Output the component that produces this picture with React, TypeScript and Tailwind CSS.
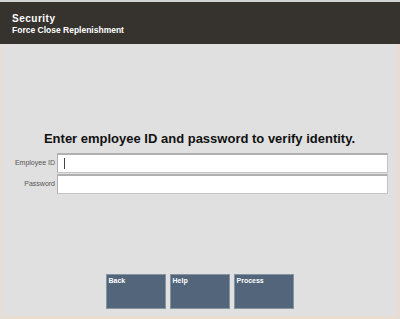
import React from 'react';

const Field: React.FC<{ label: string; cursor?: boolean }> = ({ label, cursor }) => (
  <div className="flex items-center">
    <label className="w-[55px] pr-[2px] text-right text-[7px] text-[#555555]">{label}</label>
    <div className="w-[331px] h-[20px] bg-white border border-[#c4c4c4] border-t-2 border-t-[#b0b0b0] border-l-[#b0b0b0] flex items-center pl-[6px]">
      {cursor && <span className="w-px h-[11px] bg-[#444444]" />}
    </div>
  </div>
);

const KeyButton: React.FC<{ label: string }> = ({ label }) => (
  <button className="w-[60px] h-[35px] bg-[#52657a] border border-[#8593a0] text-white text-[7px] font-bold text-left flex items-start px-[2px] pt-[1px]">
    {label}
  </button>
);

export default function App() {
  return (
    <div className="w-[400px] h-[319px] bg-[#e0e0e0] border-t-2 border-[#d4d4d4] flex flex-col font-['Liberation_Sans',Arial,sans-serif]">
      <header className="h-[42px] bg-[#36332f] text-white font-bold px-[12px] pt-[11px]">
        <div className="text-[10px] leading-[12px] tracking-[0.5px]">Security</div>
        <div className="text-[8.5px] leading-[11px]">Force Close Replenishment</div>
      </header>
      <main className="flex-1 flex flex-col border-l-2 border-r-[3px] border-b-[3px] border-[#e8ddd3]">
        <h1 className="mt-[87px] text-center text-[13px] leading-[16px] font-bold text-[#111111]">
          Enter employee ID and password to verify identity.
        </h1>
        <div className="mt-[6px] flex flex-col gap-px">
          <Field label="Employee ID" cursor />
          <Field label="Password" />
        </div>
        <div className="mt-[80px] flex justify-center gap-1">
          <KeyButton label="Back" />
          <KeyButton label="Help" />
          <KeyButton label="Process" />
        </div>
      </main>
    </div>
  );
}
